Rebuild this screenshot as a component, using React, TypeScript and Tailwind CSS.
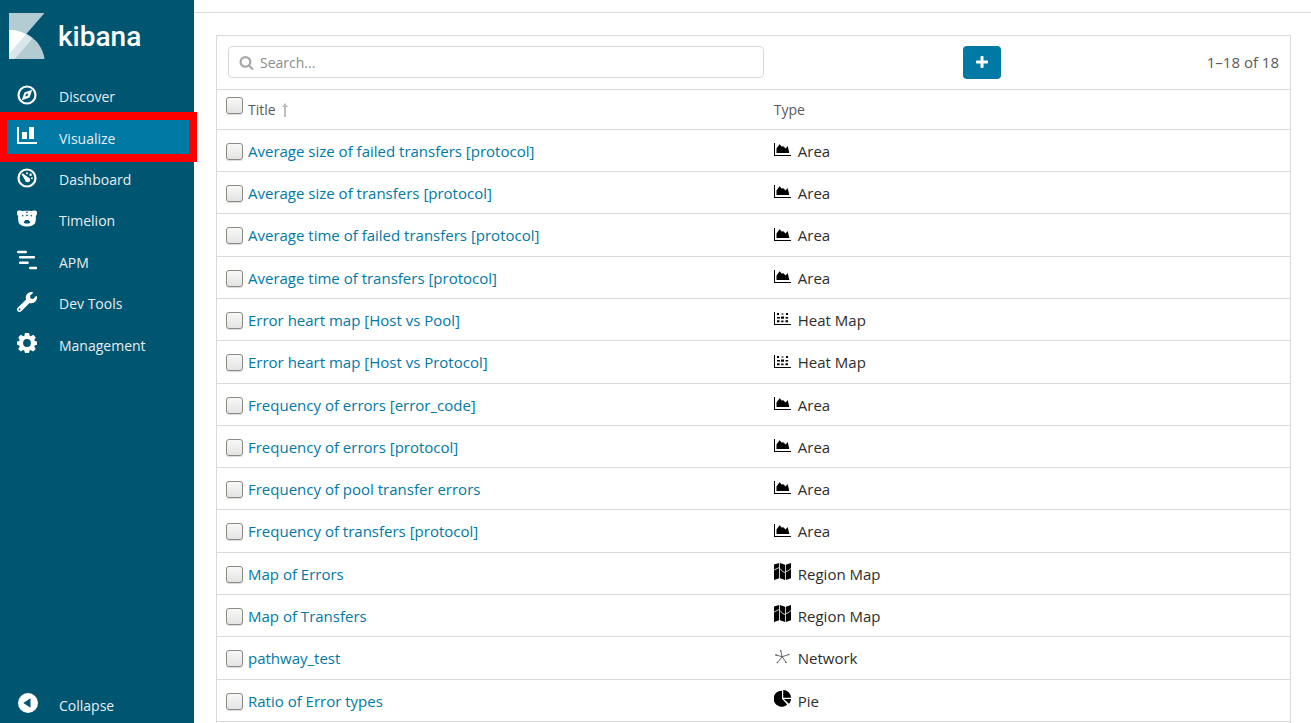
import type { ReactNode } from "react";
import { FaWrench } from "react-icons/fa";

type VisType = "Area" | "Heat Map" | "Region Map" | "Network" | "Pie";

const rows: { title: string; type: VisType }[] = [
  { title: "Average size of failed transfers [protocol]", type: "Area" },
  { title: "Average size of transfers [protocol]", type: "Area" },
  { title: "Average time of failed transfers [protocol]", type: "Area" },
  { title: "Average time of transfers [protocol]", type: "Area" },
  { title: "Error heart map [Host vs Pool]", type: "Heat Map" },
  { title: "Error heart map [Host vs Protocol]", type: "Heat Map" },
  { title: "Frequency of errors [error_code]", type: "Area" },
  { title: "Frequency of errors [protocol]", type: "Area" },
  { title: "Frequency of pool transfer errors", type: "Area" },
  { title: "Frequency of transfers [protocol]", type: "Area" },
  { title: "Map of Errors", type: "Region Map" },
  { title: "Map of Transfers", type: "Region Map" },
  { title: "pathway_test", type: "Network" },
  { title: "Ratio of Error types", type: "Pie" },
];

const checkboxClass =
  "block size-[17px] appearance-none rounded-[3px] border border-[#8b8b83] bg-linear-to-b from-[#f8f8f8] to-[#e4e4e4] shadow-[0_1px_1px_rgba(0,0,0,0.15)] checked:to-[#0079a5]";

function DiscoverIcon() {
  return (
    <svg viewBox="0 0 20 20" className="size-5" fill="none">
      <circle cx="10" cy="10" r="8.5" stroke="currentColor" strokeWidth="2.2" />
      <path d="M15.2 4.8 12.600 12.600 4.800 15.200 7.400 7.400z" fill="currentColor" />
      <path d="M9 9l2.200-.6-.6 2.600-2.200.6z" fill="#005571" />
    </svg>
  );
}

function VisualizeIcon() {
  return (
    <svg viewBox="0 0 20 20" className="size-5" fill="currentColor">
      <path d="M0 1h2v15h18v2H0zM5 6h5v7H5zM12 1h5v12h-5z" />
    </svg>
  );
}

function DashboardIcon() {
  return (
    <svg viewBox="0 0 20 20" className="size-5" fill="none">
      <circle cx="10" cy="10" r="8.5" stroke="currentColor" strokeWidth="2.2" />
      <path d="M4.600 6.300 6 5.600 11 9.200a2.600 2.600 0 1 1-3 2.800z" fill="currentColor" />
      <circle cx="10" cy="5.200" r="1" fill="currentColor" />
      <circle cx="13.600" cy="6.800" r="1.300" fill="currentColor" />
      <circle cx="14.900" cy="10.200" r="1" fill="currentColor" />
    </svg>
  );
}

function TimelionIcon() {
  return (
    <svg viewBox="0 0 20 20" className="size-5">
      <path
        fill="currentColor"
        d="M0 3.500C0 2 1.300 1.500 3 1.600c1 .1 1.800.2 2.600.4 3-.5 5.800-.5 8.800 0 .8-.2 1.600-.3 2.600-.4 1.700-.1 3 .4 3 1.900 0 1.700-.5 2.800-1.200 3.600.2 2 .2 4.400-.5 6.300-1 2.600-4.600 4.100-8.300 4.100s-7.300-1.500-8.300-4.100c-.7-1.900-.7-4.300-.5-6.300C.5 6.300 0 5.200 0 3.500z"
      />
      <g fill="#005571">
        <circle cx="5.700" cy="6.700" r=".8" />
        <circle cx="14.300" cy="6.700" r=".8" />
        <path d="M8.500 2.700h3l-.8 1H9.300zM8.400 5.700h3.200L10 7.300zM6.600 13l2-2h2.800l2 2-1.200 1.500H7.800z" />
      </g>
    </svg>
  );
}

function ApmIcon() {
  return (
    <svg viewBox="0 0 20 20" className="size-5" stroke="currentColor" strokeWidth="2.6" strokeLinecap="round">
      <path d="M1.200 2h7.500M3.200 7.300H16.800M3.200 12.700h7.300M13.300 18H19" />
    </svg>
  );
}

function ManagementIcon() {
  return (
    <svg viewBox="0 0 20 20" className="size-5" fill="currentColor" fillRule="evenodd">
      <path d="M8 0h4l.7 2.700 1.100.5 2.500-1.400 2.500 2.600-1.500 2.500.5 1.100L20 8.500v3.200l-2.300.7-.5 1.200 1.500 2.500-2.500 2.500-2.500-1.500-1.100.5L12 20H8l-.7-2.400-1.200-.5-2.400 1.500-2.500-2.500 1.500-2.500-.5-1.200L0 11.700V8.500L2.200 8l.5-1.100-1.500-2.500 2.500-2.600 2.500 1.400 1.100-.5zM10 6.100a3.900 3.900 0 1 0 0 7.800 3.900 3.900 0 0 0 0-7.800z" />
    </svg>
  );
}

function CollapseIcon() {
  return (
    <svg viewBox="0 0 20 20" className="size-5">
      <circle cx="10" cy="10" r="10" fill="currentColor" />
      <path d="M12.500 5.300v9.400L5.300 10z" fill="#005571" />
    </svg>
  );
}

function KibanaMark() {
  return (
    <svg viewBox="0 0 36 46" className="h-[46px] w-9">
      <path d="M0 0h35.500L0 41z" fill="#b3ccd4" />
      <path d="M0 46V17c19 0 33 12 35.500 29z" fill="#b3ccd4" />
      <path d="M0 17c9 0 17 3 23.400 8.500L5.800 46H0z" fill="#d9e6ea" />
      <path d="M0 17c6.500 0 12 1.500 17 4.200L0 41z" fill="#fff" />
    </svg>
  );
}

function TypeIcon({ type }: { type: VisType }) {
  if (type === "Area")
    return (
      <svg viewBox="0 0 17 17" className="size-[17px]">
        <path d="M0 3h1v12h16v1H0z" />
        <path d="M2.500 13V8.500L5.600 4.300l2.300 2.400 1.100-.8 2.600 2.700L13.700 6l1.600 7z" />
      </svg>
    );
  if (type === "Heat Map")
    return (
      <svg viewBox="0 0 17 17" className="size-[17px]">
        <path d="M0 3h1v12h16v1H0z" />
        <path d="M3 4h2v2H3zM7.500 4.500h2v1h-2zM12 4h2v2h-2zM3 8h3v1.500H3zM7 7.500h3v2.300H7zM11.500 8h2.700v1.500h-2.700zM3 11.300h2.500v2H3zM7.200 11.500h2.300v1.800H7.200zM11.500 11.300H14v2h-2.500z" />
      </svg>
    );
  if (type === "Region Map")
    return (
      <svg viewBox="0 0 17 17" className="size-[17px]">
        <path d="M0 1.500 5.200 0v15.300L0 17zM6 0l5 1.800V17l-5-1.700zM11.800 1.800 17 0v15.300L11.800 17z" />
        <path d="M0 7 5.200 4.500M6 5.500l2.500 3 2.500 1M11.800 8.500 14 8l3-2.500" fill="none" stroke="#fff" strokeWidth=".8" />
      </svg>
    );
  if (type === "Network")
    return (
      <svg viewBox="0 0 17 17" className="size-[17px]" stroke="#555" strokeWidth=".9" fill="#333">
        <path d="M8.200 8.700 6.800 3M8.200 8.700l6.300-2M8.200 8.700l3.800 5.600M8.200 8.700 3.500 14.500M8.200 8.700 2 7" fill="none" />
        <circle cx="6.800" cy="2.800" r=".4" />
        <circle cx="14.800" cy="6.500" r=".4" />
        <circle cx="12" cy="14.500" r=".4" />
        <circle cx="3.300" cy="14.700" r=".4" />
        <circle cx="2" cy="7" r=".4" />
      </svg>
    );
  return (
    <svg viewBox="0 0 17 17" className="size-[17px]">
      <path d="M8 .7v8l5.200 5.700A8 8 0 1 1 8 .7z" />
      <path d="M9.200 0A8 8 0 0 1 17 7.800H9.200zM9.900 9H17c0 1.700-.9 3.400-2 4.800z" />
    </svg>
  );
}

const navItems: { label: string; icon: ReactNode; active?: boolean }[] = [
  { label: "Discover", icon: <DiscoverIcon /> },
  { label: "Visualize", icon: <VisualizeIcon />, active: true },
  { label: "Dashboard", icon: <DashboardIcon /> },
  { label: "Timelion", icon: <TimelionIcon /> },
  { label: "APM", icon: <ApmIcon /> },
  { label: "Dev Tools", icon: <FaWrench className="size-5" /> },
  { label: "Management", icon: <ManagementIcon /> },
];

function Sidebar() {
  return (
    <aside className="relative z-10 flex w-[194px] shrink-0 flex-col bg-[#005571] text-white">
      <a href="#home" className="flex items-center gap-[13px] pt-[13px] pl-[9px]">
        <KibanaMark />
        <span className="pt-0.5 font-['Roboto',sans-serif] text-[28px] leading-[44px] font-medium">kibana</span>
      </a>
      <nav className="mt-[17px] grid h-[290px] grid-rows-7">
        {navItems.map((item) => (
          <a
            key={item.label}
            href={"#" + item.label}
            className={
              item.active
                ? "relative flex items-center gap-[22px] bg-[#0079a5] pl-[17px]"
                : "relative flex items-center gap-[22px] pl-[17px]"
            }
          >
            <span className="pb-1">{item.icon}</span>
            <span className="pt-px text-sm text-[#e6eef1]">{item.label}</span>
            {item.active && <span className="absolute -top-[5px] -right-[3px] -left-px h-[50px] border-8 border-[#ff0000]" />}
          </a>
        ))}
      </nav>
      <button type="button" className="mt-auto flex h-9 items-center gap-[21px] pl-[18px] text-left">
        <span className="pb-1">
          <CollapseIcon />
        </span>
        <span className="pt-px text-sm text-[#e6eef1]">Collapse</span>
      </button>
    </aside>
  );
}

export default function App() {
  return (
    <div className="flex h-screen overflow-hidden bg-white font-['Open_Sans',sans-serif] text-[15px] leading-5 text-[#2d2d2d]">
      <Sidebar />
      <main className="flex min-w-0 flex-1 flex-col">
        <header className="h-[13px] shrink-0 border-b border-[#d9d9d9]" />
        <section className="mt-[22px] mr-5 ml-[22px] flex-1 border-x border-t border-[#d9d9d9]">
          <div className="flex h-[53px] items-center px-[11px]">
            <label className="mb-px flex h-8 w-[51%] items-center gap-1.5 rounded border border-[#d9d9d9] pl-2.5">
              <svg viewBox="0 0 1792 1792" className="size-[15px] shrink-0 fill-[#a8a8a8]">
                <path d="M1216 832q0-185-131.500-316.500t-316.500-131.500-316.500 131.500-131.500 316.500 131.500 316.500 316.500 131.500 316.500-131.500 131.500-316.500zm512 832q0 52-38 90t-90 38q-54 0-90-38l-343-342q-179 124-399 124-143 0-273.500-55.500t-225-150-150-225-55.500-273.500 55.500-273.500 150-225 225-150 273.500-55.500 273.500 55.500 225 150 150 225 55.500 273.500q0 220-124 399l343 343q37 37 37 90z" />
              </svg>
              <input
                type="text"
                placeholder="Search..."
                aria-label="Search"
                className="min-w-0 flex-1 bg-transparent pt-px text-sm outline-none placeholder:text-[#8c8c8c]"
              />
            </label>
            <div className="flex flex-1 items-center justify-end">
              <button
                type="button"
                aria-label="Create"
                className="flex h-[33px] w-[38px] items-center justify-center rounded bg-[#0079a5]"
              >
                <svg viewBox="0 0 12 12" className="mb-0.5 size-3 fill-white">
                  <path d="M5.200 0h1.600q.7 0 .7.700v3.800h3.800q.7 0 .7.700v1.600q0 .7-.7.700H7.500v3.800q0 .7-.7.700H5.200q-.7 0-.7-.7V7.500H.7Q0 7.500 0 6.800V5.200q0-.7.700-.7h3.800V.7q0-.7.700-.7z" />
                </svg>
              </button>
              <span className="w-[54%] pb-px text-right text-[#5a5a5a]">1–18 of 18</span>
            </div>
          </div>
          <table className="w-full table-fixed border-collapse text-left">
            <colgroup>
              <col className="w-[31px]" />
              <col className="w-[49%]" />
              <col />
            </colgroup>
            <thead>
              <tr className="h-10 border-y border-[#d9d9d9] text-sm text-[#5a5a5a]">
                <th className="pb-2 pl-[9px]">
                  <input type="checkbox" aria-labelledby="title-column" className={checkboxClass} />
                </th>
                <th className="font-normal">
                  <button type="button" className="flex items-center gap-1.5">
                    <span id="title-column">Title</span>
                    <svg viewBox="0 0 6 14" className="h-3.5 w-1.5 fill-[#bdbdbd]">
                      <path d="M3 0l3 4H4v10H2V4H0z" />
                    </svg>
                  </button>
                </th>
                <th className="font-normal">Type</th>
              </tr>
            </thead>
            <tbody>
              {rows.map((row, i) => (
                <tr
                  key={row.title}
                  className="h-[42px] border-b border-[#d9d9d9] nth-[7n+3]:h-[43px] nth-[7n+6]:h-[43px]"
                >
                  <td className="pt-px pl-[9px]">
                    <input type="checkbox" aria-labelledby={"vis-" + i} className={checkboxClass} />
                  </td>
                  <td>
                    <a id={"vis-" + i} href={"#vis-" + i} className="text-[#0079a5]">
                      {row.title}
                    </a>
                  </td>
                  <td>
                    <span className="flex items-center gap-[7px]">
                      <span className="pb-1 text-black">
                        <TypeIcon type={row.type} />
                      </span>
                      {row.type}
                    </span>
                  </td>
                </tr>
              ))}
            </tbody>
          </table>
        </section>
      </main>
    </div>
  );
}
